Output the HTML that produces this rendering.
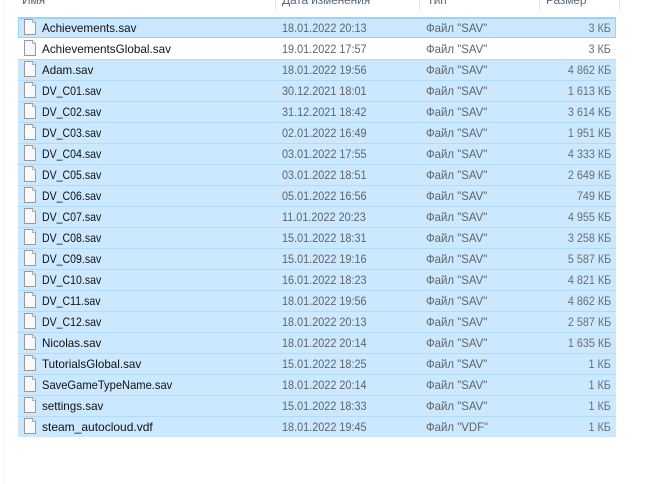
<!DOCTYPE html>
<html><head><meta charset="utf-8"><style>
html,body{margin:0;padding:0;width:656px;height:484px;overflow:hidden;background:#fff}
body{position:relative;font-family:"Liberation Sans",sans-serif;font-size:12px}
.vl{position:absolute;left:3px;top:0;width:1px;height:484px;background:#f5f5f5}
.sep{position:absolute;top:0;width:1px;height:11px;background:#e8e8e8}
.h{position:absolute;top:-7px;line-height:14px;color:#56667a;white-space:nowrap;letter-spacing:-.15px}
.r{position:absolute;left:18px;width:598px;height:20px;background:#cce8ff;border-top:1px solid #b0dbfb}
.r.w{background:#fff;border-top-color:#fff}
.r.f{box-shadow:inset 0 0 0 1px #99d1ff;border-top:1px solid #99d1ff}
.r svg{position:absolute;left:6px;top:1px}
.r span{position:absolute;top:3px;line-height:14px;white-space:nowrap;transform-origin:0 50%}
.n{left:24px;color:#111;transform:scaleX(.88)}
.d{left:264px;color:#606468;transform:scaleX(.905)}
.t{left:408px;color:#606468;transform:scaleX(.95)}
.r .s{right:5px;color:#6a6e72;transform:scaleX(.9);transform-origin:100% 50%}
</style></head><body>
<div class="vl"></div>
<div class="sep" style="left:275px"></div><div class="sep" style="left:419px"></div><div class="sep" style="left:539px"></div><div class="sep" style="left:619px"></div>
<div class="h" style="left:22px">Имя</div>
<div class="h" style="left:282px">Дата изменения</div>
<div class="h" style="left:427px">Тип</div>
<div class="h" style="left:546px">Размер</div>
<svg width="0" height="0" style="position:absolute"><defs><symbol id="i" viewBox="0 0 12 16"><path d="M.5.500H8.500L11.500 3.500V15.500H.5Z" fill="#f9f9f9" stroke="#9a9a9a"/><path d="M8.500.500V3.500H11.500" fill="#fff" stroke="#b0b0b0"/></symbol></defs></svg>
<div class="r f" style="top:17px"><svg width="12" height="16"><use href="#i"/></svg><span class="n" style="transform:scaleX(.97)">Achievements.sav</span><span class="d">18.01.2022 20:13</span><span class="t">Файл "SAV"</span><span class="s">3 КБ</span></div>
<div class="r w" style="top:38px"><svg width="12" height="16"><use href="#i"/></svg><span class="n" style="transform:scaleX(.977)">AchievementsGlobal.sav</span><span class="d">19.01.2022 17:57</span><span class="t">Файл "SAV"</span><span class="s">3 КБ</span></div>
<div class="r" style="top:59px"><svg width="12" height="16"><use href="#i"/></svg><span class="n" style="transform:scaleX(.963)">Adam.sav</span><span class="d">18.01.2022 19:56</span><span class="t">Файл "SAV"</span><span class="s">4 862 КБ</span></div>
<div class="r" style="top:80px"><svg width="12" height="16"><use href="#i"/></svg><span class="n">DV_C01.sav</span><span class="d">30.12.2021 18:01</span><span class="t">Файл "SAV"</span><span class="s">1 613 КБ</span></div>
<div class="r" style="top:101px"><svg width="12" height="16"><use href="#i"/></svg><span class="n">DV_C02.sav</span><span class="d">31.12.2021 18:42</span><span class="t">Файл "SAV"</span><span class="s">3 614 КБ</span></div>
<div class="r" style="top:122px"><svg width="12" height="16"><use href="#i"/></svg><span class="n">DV_C03.sav</span><span class="d">02.01.2022 16:49</span><span class="t">Файл "SAV"</span><span class="s">1 951 КБ</span></div>
<div class="r" style="top:143px"><svg width="12" height="16"><use href="#i"/></svg><span class="n">DV_C04.sav</span><span class="d">03.01.2022 17:55</span><span class="t">Файл "SAV"</span><span class="s">4 333 КБ</span></div>
<div class="r" style="top:164px"><svg width="12" height="16"><use href="#i"/></svg><span class="n">DV_C05.sav</span><span class="d">03.01.2022 18:51</span><span class="t">Файл "SAV"</span><span class="s">2 649 КБ</span></div>
<div class="r" style="top:185px"><svg width="12" height="16"><use href="#i"/></svg><span class="n">DV_C06.sav</span><span class="d">05.01.2022 16:56</span><span class="t">Файл "SAV"</span><span class="s">749 КБ</span></div>
<div class="r" style="top:206px"><svg width="12" height="16"><use href="#i"/></svg><span class="n">DV_C07.sav</span><span class="d">11.01.2022 20:23</span><span class="t">Файл "SAV"</span><span class="s">4 955 КБ</span></div>
<div class="r" style="top:227px"><svg width="12" height="16"><use href="#i"/></svg><span class="n">DV_C08.sav</span><span class="d">15.01.2022 18:31</span><span class="t">Файл "SAV"</span><span class="s">3 258 КБ</span></div>
<div class="r" style="top:248px"><svg width="12" height="16"><use href="#i"/></svg><span class="n">DV_C09.sav</span><span class="d">15.01.2022 19:16</span><span class="t">Файл "SAV"</span><span class="s">5 587 КБ</span></div>
<div class="r" style="top:269px"><svg width="12" height="16"><use href="#i"/></svg><span class="n">DV_C10.sav</span><span class="d">16.01.2022 18:23</span><span class="t">Файл "SAV"</span><span class="s">4 821 КБ</span></div>
<div class="r" style="top:290px"><svg width="12" height="16"><use href="#i"/></svg><span class="n">DV_C11.sav</span><span class="d">18.01.2022 19:56</span><span class="t">Файл "SAV"</span><span class="s">4 862 КБ</span></div>
<div class="r" style="top:311px"><svg width="12" height="16"><use href="#i"/></svg><span class="n">DV_C12.sav</span><span class="d">18.01.2022 20:13</span><span class="t">Файл "SAV"</span><span class="s">2 587 КБ</span></div>
<div class="r" style="top:332px"><svg width="12" height="16"><use href="#i"/></svg><span class="n" style="transform:scaleX(.967)">Nicolas.sav</span><span class="d">18.01.2022 20:14</span><span class="t">Файл "SAV"</span><span class="s">1 635 КБ</span></div>
<div class="r" style="top:353px"><svg width="12" height="16"><use href="#i"/></svg><span class="n" style="transform:scaleX(.97)">TutorialsGlobal.sav</span><span class="d">15.01.2022 18:25</span><span class="t">Файл "SAV"</span><span class="s">1 КБ</span></div>
<div class="r" style="top:374px"><svg width="12" height="16"><use href="#i"/></svg><span class="n" style="transform:scaleX(.93)">SaveGameTypeName.sav</span><span class="d">18.01.2022 20:14</span><span class="t">Файл "SAV"</span><span class="s">1 КБ</span></div>
<div class="r" style="top:395px"><svg width="12" height="16"><use href="#i"/></svg><span class="n" style="transform:scaleX(.968)">settings.sav</span><span class="d">15.01.2022 18:33</span><span class="t">Файл "SAV"</span><span class="s">1 КБ</span></div>
<div class="r" style="top:416px"><svg width="12" height="16"><use href="#i"/></svg><span class="n" style="transform:none">steam_autocloud.vdf</span><span class="d">18.01.2022 19:45</span><span class="t">Файл "VDF"</span><span class="s">1 КБ</span></div>
</body></html>
